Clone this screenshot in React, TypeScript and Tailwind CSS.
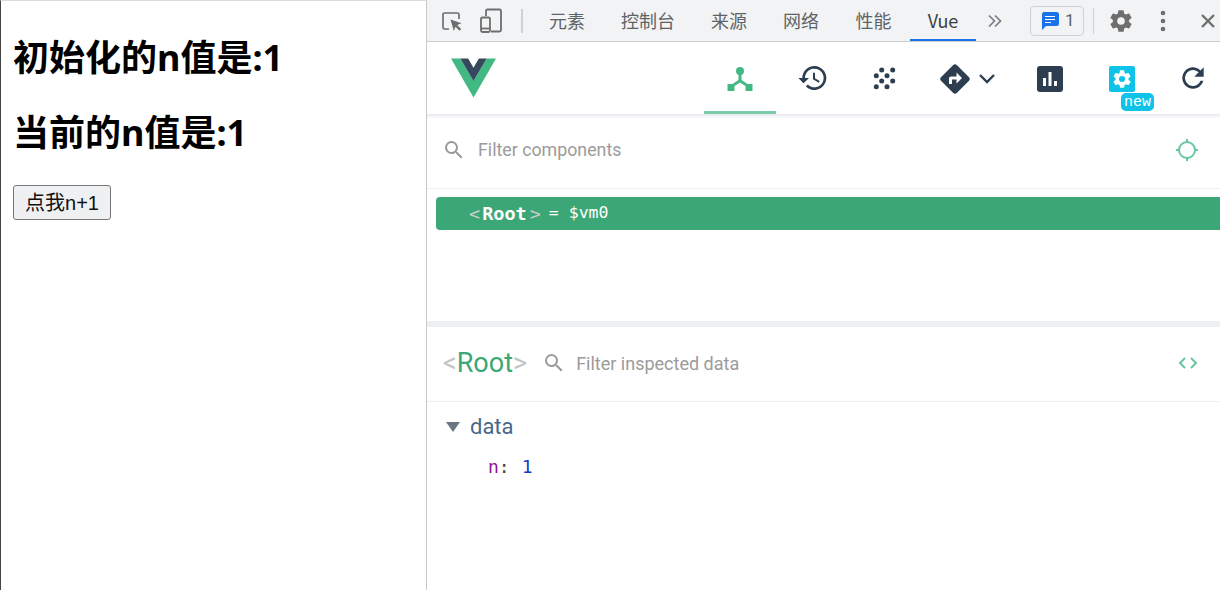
import React from "react";

const cjk = '"Noto Sans CJK SC", "Noto Sans", sans-serif';
const heading = '"Noto Sans", "Noto Sans CJK SC", sans-serif';

function Tab({ label, active, w }: { label: string; active?: boolean; w: number }) {
  return (
    <div
      className={`relative flex h-[41px] items-center justify-center text-[18px] ${active ? "text-[#3c4043]" : "text-[#5f6368]"}`}
      style={{ width: w, fontFamily: cjk }}
    >
      {label}
      {active && <div className="absolute right-0 bottom-0 left-0 h-[2px] bg-[#1a73e8]" />}
    </div>
  );
}

function SearchIcon({ className }: { className: string }) {
  return (
    <svg viewBox="0 0 24 24" className={className} fill="#9a9a9a">
      <path d="M15.5 14h-.79l-.28-.27A6.47 6.47 0 0 0 16 9.5 6.5 6.5 0 1 0 9.5 16c1.61 0 3.09-.59 4.23-1.57l.27.28v.79l5 4.99L20.49 19l-4.99-5zm-6 0C7.01 14 5 11.99 5 9.5S7.01 5 9.5 5 14 7.01 14 9.5 11.99 14 9.5 14z" />
    </svg>
  );
}

const gear =
  "M19.430 12.980c.04-.32.07-.64.07-.98s-.03-.66-.07-.98l2.110-1.650a.5.500 0 0 0 .12-.64l-2-3.460a.5.500 0 0 0-.61-.22l-2.490 1a7.300 7.300 0 0 0-1.690-.98l-.38-2.650A.49.490 0 0 0 14 2h-4a.49.490 0 0 0-.49.420l-.38 2.650a7.680 7.680 0 0 0-1.690.98l-2.490-1a.49.490 0 0 0-.61.22l-2 3.460a.49.490 0 0 0 .12.64l2.110 1.650c-.04.32-.07.650-.07.980s.03.660.07.980l-2.110 1.650a.5.500 0 0 0-.12.640l2 3.460c.12.220.39.300.61.220l2.490-1c.520.400 1.080.730 1.690.980l.38 2.650c.03.240.240.420.490.420h4c.250 0 .460-.180.490-.420l.38-2.650a7.680 7.680 0 0 0 1.690-.98l2.490 1c.230.090.490 0 .610-.220l2-3.460a.5.500 0 0 0-.12-.64l-2.110-1.650zM12 15.500a3.500 3.500 0 1 1 0-7 3.500 3.500 0 0 1 0 7z";

export default function App() {
  return (
    <div className="flex h-[590px] w-[1220px] overflow-hidden bg-white">
      {/* Inspected page */}
      <main className="h-full w-[427px] shrink-0 border-t border-r border-l border-t-[#dcdcdc] border-r-[#c9c9c9] border-l-[#444] pt-[38px] pl-3">
        <h1 className="h-[38px] text-[36px] leading-[38px] font-bold whitespace-nowrap text-black" style={{ fontFamily: heading }}>初始化的n值是:1</h1>
        <h1 className="mt-[37px] h-[38px] text-[36px] leading-[38px] font-bold whitespace-nowrap text-black" style={{ fontFamily: heading }}>当前的n值是:1</h1>
        <button className="mt-[33px] flex h-[35px] w-[98px] items-center justify-center rounded-[3px] border border-[#767676] bg-[#eff0f1] text-[20px] text-[#111]" style={{ fontFamily: '"Liberation Sans", "Noto Sans CJK SC", sans-serif' }}>点我n+1</button>
      </main>

      {/* DevTools */}
      <section className="flex h-full min-w-0 flex-1 flex-col">
        <header className="flex h-[42px] shrink-0 items-center border-b border-[#cbcdd1] bg-[#f1f3f4]">
          <svg viewBox="0 0 24 24" className="ml-[13px] h-[24px] w-[24px]" fill="none">
            <path d="M9 20H4.500A1.500 1.500 0 0 1 3 18.500v-13A1.500 1.500 0 0 1 4.500 4h13A1.500 1.500 0 0 1 19 5.500V10" stroke="#6e6e6e" strokeWidth="1.700" />
            <path d="M10.500 10.500l11 3.800-4.300 1.700 4 4-1.700 1.700-4-4-1.700 4.300z" fill="#6e6e6e" />
          </svg>
          <svg viewBox="0 0 24 26" className="ml-[15px] h-[26px] w-[24px]" fill="none" stroke="#6e6e6e" strokeWidth="1.800">
            <path d="M7 8V3a1.500 1.500 0 0 1 1.500-1.500h12A1.500 1.500 0 0 1 22 3v19a1.500 1.500 0 0 1-1.500 1.500H12" />
            <rect x="2" y="9.500" width="9" height="14.500" rx="1.500" />
            <path d="M2 20.500h9" />
          </svg>
          <div className="mr-[8px] ml-[18px] h-[24px] w-[2px] bg-[#cfd1d4]" />
          <Tab label="元素" w={72} />
          <Tab label="控制台" w={90} />
          <Tab label="来源" w={72} />
          <Tab label="网络" w={72} />
          <Tab label="性能" w={73} />
          <Tab label="Vue" active w={66} />
          <svg viewBox="0 0 16 16" className="ml-[11px] h-[16px] w-[16px]" fill="none" stroke="#777d85" strokeWidth="1.700">
            <path d="M2 2.500 7.500 8 2 13.500M8 2.500 13.500 8 8 13.500" />
          </svg>
          <div className="ml-[27px] flex h-[30px] w-[54px] shrink-0 items-center rounded-[4px] border border-[#cfd1d4] pl-[10px]">
            <svg viewBox="0 0 18 18" className="h-[18px] w-[18px]">
              <path d="M2.500 0h13A2.500 2.500 0 0 1 18 2.500v9a2.500 2.500 0 0 1-2.500 2.500H5l-4 4H1V2.500A2.500 2.500 0 0 1 2.500 0z" fill="#1a73e8" />
              <path d="M4 4.500h10M4 7.500h10M4 10.500h6" stroke="#fff" strokeWidth="1.200" />
            </svg>
            <span className="ml-[6px] text-[17px] text-[#5f6368]" style={{ fontFamily: '"Roboto", sans-serif' }}>1</span>
          </div>
          <div className="ml-[9px] h-[26px] w-px shrink-0 bg-[#cfd1d4]" />
          <svg viewBox="0 0 24 24" className="ml-[14px] h-[26px] w-[26px] shrink-0" fill="#6e6e6e">
            <path d={gear} />
          </svg>
          <svg viewBox="0 0 6 22" className="ml-[26px] h-[22px] w-[6px] shrink-0" fill="#6e6e6e">
            <circle cx="3" cy="3" r="2.300" />
            <circle cx="3" cy="11" r="2.300" />
            <circle cx="3" cy="19" r="2.300" />
          </svg>
          <svg viewBox="0 0 16 16" className="ml-[34px] h-[16px] w-[16px] shrink-0" fill="none" stroke="#6e6e6e" strokeWidth="2.400">
            <path d="M2 2l12 12M14 2 2 14" />
          </svg>
        </header>

        {/* Vue devtools nav */}
        <nav className="flex h-[72px] shrink-0 items-start">
          <svg viewBox="0 0 46 40" className="mt-[16px] ml-[24px] h-[40px] w-[45px] shrink-0">
            <path d="M0 0h9.500L23 23 36.500 0H46L23 40z" fill="#42b883" />
            <path d="M9.500 0h8L23 9.500 28.500 0h8L23 23z" fill="#35495e" />
          </svg>
          <div className="relative ml-[208px] flex h-[72px] w-[72px] shrink-0 items-start justify-center">
            <svg viewBox="0 0 26 26" className="mt-[24px] h-[26px] w-[26px]" fill="#42b883">
              <circle cx="13" cy="5" r="4" />
              <path d="M11.500 8h3v6l6 4-1.600 2.300L13 16.600l-5.900 3.700L5.500 18l6-4z" />
              <rect x="0.500" y="18" width="7" height="7" />
              <rect x="18.500" y="18" width="7" height="7" />
            </svg>
            <div className="absolute right-0 bottom-0 left-0 h-[3px] bg-[#7ccba8]" />
          </div>
          <svg viewBox="0 0 24 24" className="mt-[20px] ml-[21px] h-[32px] w-[32px] shrink-0" fill="#2c3e50">
            <path d="M13 3a9 9 0 0 0-9 9H1l3.890 3.890.07.140L9 12H6a7 7 0 1 1 2.050 4.950l-1.420 1.420A9 9 0 1 0 13 3zm-1 5v5l4.280 2.540.72-1.210-3.500-2.080V8z" />
          </svg>
          <svg viewBox="0 0 24 24" className="mt-[24px] ml-[43px] h-[24px] w-[24px] shrink-0" fill="#2c3e50">
            <circle cx="9.700" cy="4" r="2.500" />
            <circle cx="20.700" cy="4" r="2.500" />
            <circle cx="4.300" cy="9.700" r="2.500" />
            <circle cx="15" cy="9.700" r="2.500" />
            <circle cx="9.700" cy="15" r="2.500" />
            <circle cx="20.700" cy="15" r="2.500" />
            <circle cx="4.300" cy="20.700" r="2.500" />
            <circle cx="15" cy="20.700" r="2.500" />
          </svg>
          <svg viewBox="0 0 30 30" className="mt-[22px] ml-[44px] h-[30px] w-[30px] shrink-0" fill="#2c3e50">
            <path fillRule="evenodd" d="M13 1.200a2.800 2.800 0 0 1 4 0L28.800 13a2.800 2.800 0 0 1 0 4L17 28.800a2.800 2.800 0 0 1-4 0L1.200 17a2.800 2.800 0 0 1 0-4zM16.500 8.500v4H11a2 2 0 0 0-2 2V20h3v-4.500h4.500v4L22 14z" />
          </svg>
          <svg viewBox="0 0 18 12" className="mt-[31px] ml-[8px] h-[12px] w-[18px] shrink-0" fill="none" stroke="#2c3e50" strokeWidth="2.400">
            <path d="M2 2l7 7 7-7" />
          </svg>
          <svg viewBox="0 0 26 26" className="mt-[24px] ml-[41px] h-[26px] w-[26px] shrink-0">
            <rect width="26" height="26" rx="3" fill="#2c3e50" />
            <path d="M6 12h3v8H6zM11.500 6h3v14h-3zM17 15h3v5h-3z" fill="#fff" />
          </svg>
          <div className="relative mt-[24px] ml-[46px] h-[26px] w-[26px] shrink-0">
            <svg viewBox="0 0 26 26" className="h-[26px] w-[26px]">
              <rect width="26" height="26" rx="2" fill="#0fc3e8" />
              <path transform="translate(2.600 2.600) scale(0.87)" fill="#fff" d={gear} />
            </svg>
            <span
              className="absolute top-[27px] left-[12px] flex h-[18px] w-[33px] items-center justify-center rounded-[5px] bg-[#0fc3e8] text-[15px] leading-none text-white"
              style={{ fontFamily: '"Liberation Mono", monospace' }}
            >
              new
            </span>
          </div>
          <svg viewBox="0 0 24 24" className="mt-[20px] ml-[42px] h-[32px] w-[32px] shrink-0" fill="#2c3e50">
            <path d="M17.650 6.350A8 8 0 1 0 19.730 14h-2.080A6 6 0 1 1 12 6c1.660 0 3.140.690 4.220 1.780L13 11h7V4z" />
          </svg>
        </nav>
        <div className="h-[2px] shrink-0 bg-[#ebedf0]" />
        <div className="h-[2px] shrink-0 bg-[#f6f7f8]" />

        {/* Filter components */}
        <div className="flex h-[71px] shrink-0 items-center border-b border-[#eeeeee] pr-[21px] pb-[6px] pl-[15px]">
          <SearchIcon className="h-[24px] w-[24px]" />
          <span className="ml-[12px] text-[17.800px] text-[#9b9b9b]" style={{ fontFamily: '"Roboto", sans-serif' }}>Filter components</span>
          <svg viewBox="0 0 24 24" className="ml-auto h-[24px] w-[24px]" fill="none" stroke="#68c79e" strokeWidth="2">
            <circle cx="12" cy="12" r="8" />
            <path d="M12 1v4M12 19v4M1 12h4M19 12h4" />
          </svg>
        </div>

        {/* Tree */}
        <div className="h-[132px] shrink-0 pt-[8px] pl-[9px]">
          <div
            className="flex h-[33px] items-center rounded-l-[4px] bg-[#3ba776] pl-[33px] text-[18.500px] text-white"
            style={{ fontFamily: '"DejaVu Sans Mono", monospace' }}
          >
            <span className="text-[#c8cfcb]">&lt;</span>
            <span className="ml-[2px] font-bold">Root</span>
            <span className="ml-[3px] text-[#c8cfcb]">&gt;</span>
            <span className="ml-[8px] text-[16.500px]">= $vm0</span>
          </div>
        </div>
        <div className="h-[6px] shrink-0 bg-[#eeeff0]" />

        {/* Inspector */}
        <div className="flex h-[75px] shrink-0 items-center border-b border-[#eeeeee] pr-[22px] pb-[2px] pl-[16px]">
          <span className="text-[27px] leading-none text-[#c4c4c4]" style={{ fontFamily: '"Roboto", sans-serif' }}>
            &lt;<span className="text-[#3ba776]">Root</span>&gt;
          </span>
          <SearchIcon className="ml-[15px] h-[24px] w-[24px]" />
          <span className="ml-[10px] text-[18px] text-[#9b9b9b]" style={{ fontFamily: '"Roboto", sans-serif' }}>Filter inspected data</span>
          <svg viewBox="0 0 20 14" className="ml-auto h-[14px] w-[20px]" fill="none" stroke="#68c79e" strokeWidth="2">
            <path d="M7 2 2 7l5 5M13 2l5 5-5 5" />
          </svg>
        </div>

        <div className="flex items-center pt-[10px] pl-[19px]">
          <svg viewBox="0 0 14 10" className="h-[10px] w-[14px]" fill="#6b7685">
            <path d="M0 0h14L7 10z" />
          </svg>
          <span className="ml-[10px] text-[22px] leading-[30px] text-[#486887]" style={{ fontFamily: '"Roboto", sans-serif' }}>data</span>
        </div>
        <div className="mt-[14px] pl-[61px] text-[18px] leading-[22px]" style={{ fontFamily: '"DejaVu Sans Mono", monospace' }}>
          <span className="text-[#881391]">n</span>
          <span className="text-[#444]">:</span>
          <span className="ml-[12px] text-[#0b3fc4]">1</span>
        </div>
      </section>
    </div>
  );
}
